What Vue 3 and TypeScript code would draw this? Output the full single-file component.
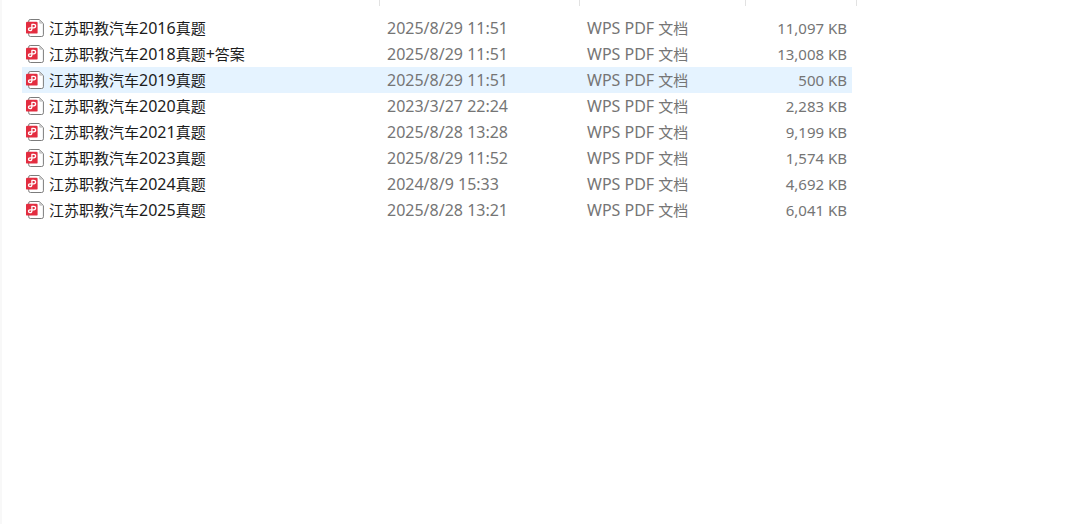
<script setup lang="ts">
interface FileEntry {
  name: string
  modified: string
  size: string
  active?: boolean
}

interface Run {
  text: string
  latin: boolean
}

const files: FileEntry[] = [
  { name: '江苏职教汽车2016真题', modified: '2025/8/29 11:51', size: '11,097 KB' },
  { name: '江苏职教汽车2018真题+答案', modified: '2025/8/29 11:51', size: '13,008 KB' },
  { name: '江苏职教汽车2019真题', modified: '2025/8/29 11:51', size: '500 KB', active: true },
  { name: '江苏职教汽车2020真题', modified: '2023/3/27 22:24', size: '2,283 KB' },
  { name: '江苏职教汽车2021真题', modified: '2025/8/28 13:28', size: '9,199 KB' },
  { name: '江苏职教汽车2023真题', modified: '2025/8/29 11:52', size: '1,574 KB' },
  { name: '江苏职教汽车2024真题', modified: '2024/8/9 15:33', size: '4,692 KB' },
  { name: '江苏职教汽车2025真题', modified: '2025/8/28 13:21', size: '6,041 KB' },
]

const fileType = 'WPS PDF 文档'

// Latin letters and digits are set one size above the Chinese text.
function runs(text: string): Run[] {
  const parts = text.match(/[\x20-\x7e]+|[^\x20-\x7e]+/g) ?? []
  return parts.map((part) => ({ text: part, latin: /^[\x20-\x7e]/.test(part) }))
}
</script>

<template>
  <main class="pane">
    <table class="files">
      <colgroup>
        <col class="col-name" />
        <col class="col-date" />
        <col class="col-type" />
        <col class="col-size" />
        <col class="col-end" />
      </colgroup>
      <thead>
        <tr>
          <th scope="col" aria-label="名称"></th>
          <th scope="col" aria-label="修改日期"></th>
          <th scope="col" aria-label="类型"></th>
          <th scope="col" colspan="2" aria-label="大小"></th>
        </tr>
      </thead>
      <tbody>
        <tr v-for="file in files" :key="file.name" :class="{ active: file.active }">
          <td>
            <div class="name">
              <svg class="icon" viewBox="0 0 18 18" aria-hidden="true">
                <path
                  d="M4.2 0.5H13.2L17.4 4.6V15.8Q17.4 17.5 15.7 17.5H4.4Q2.7 17.5 2.7 15.8V2Q2.7 0.5 4.2 0.5Z"
                  fill="#fff"
                  stroke="#7c7c7c"
                />
                <path d="M13.2 0.8V3.4Q13.2 4.7 14.5 4.7H17.2Z" fill="#c9c9c9" />
                <rect x="0" y="2.8" width="11.6" height="11.8" rx="1.2" fill="#e32d40" />
                <path
                  d="M5.9 10V5.3H7.7Q9.6 5.3 9.6 7.1Q9.6 8.9 7.7 8.9H4Q2.5 8.9 2.5 10.3Q2.5 11.7 4 11.7Q5.9 11.7 5.9 9.8"
                  fill="none"
                  stroke="#fff"
                  stroke-width="1.3"
                  stroke-linecap="round"
                  stroke-linejoin="round"
                />
              </svg>
              <span>
                <span v-for="(run, i) in runs(file.name)" :key="i" :class="{ latin: run.latin }">{{ run.text }}</span>
              </span>
            </div>
          </td>
          <td class="latin">{{ file.modified }}</td>
          <td>
            <span v-for="(run, i) in runs(fileType)" :key="i" :class="{ latin: run.latin }">{{ run.text }}</span>
          </td>
          <td class="size">{{ file.size }}</td>
          <td class="end"></td>
        </tr>
      </tbody>
    </table>
  </main>
</template>

<style>
body {
  margin: 0;
  background: #fff;
}
</style>

<style scoped>
.pane {
  box-sizing: border-box;
  min-height: 100vh;
  padding-left: 20px;
  border-left: 2px solid #f8f8f8;
  background: #fff;
  color: #757575;
  font-family: 'Noto Sans', 'Noto Sans CJK SC', sans-serif;
  font-size: 15px;
  line-height: 24px;
}

.files {
  width: 835px;
  border-collapse: separate;
  border-spacing: 0;
  table-layout: fixed;
}

.col-name {
  width: 358px;
}

.col-date {
  width: 200px;
}

.col-type {
  width: 166px;
}

.col-size {
  width: 106px;
}

.col-end {
  width: 5px;
}

th {
  height: 6px;
  padding: 0;
  border-right: 1px solid #e2e2e2;
}

thead::after {
  content: '';
  display: block;
  height: 9px;
}

td {
  height: 26px;
  padding: 0 0 0 7px;
  white-space: nowrap;
}

td:first-child {
  padding-left: 4px;
}

.active td:not(.end) {
  background: #e5f3ff;
}

.name {
  display: flex;
  align-items: center;
  gap: 5px;
  height: 26px;
  color: #1c1c1c;
}

.icon {
  flex: none;
  width: 18px;
  height: 18px;
}

.latin {
  font-size: 16px;
  white-space: pre;
}

.size {
  padding: 0 5px 0 0;
  text-align: right;
}

.end {
  padding: 0;
}
</style>
